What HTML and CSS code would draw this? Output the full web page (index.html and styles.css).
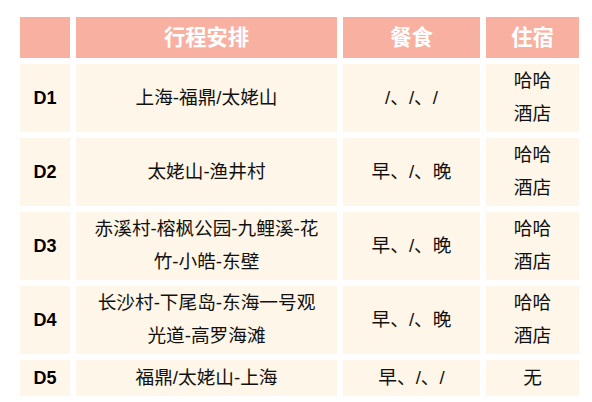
FILE: index.html
```html
<!DOCTYPE html>
<html lang="zh-CN">
<head>
<meta charset="utf-8">
<title>行程安排</title>
<link rel="stylesheet" href="styles.css">
</head>
<body>
<div class="wrap">
<table class="plan">
  <colgroup>
    <col class="c-day"><col class="c-route"><col class="c-meal"><col class="c-hotel">
  </colgroup>
  <thead>
    <tr class="head">
      <th></th><th>行程安排</th><th>餐食</th><th>住宿</th>
    </tr>
  </thead>
  <tbody>
    <tr class="tall">
      <td class="day">D1</td><td>上海-福鼎/太姥山</td><td>/、/、/</td><td>哈哈<br>酒店</td>
    </tr>
    <tr class="tall">
      <td class="day">D2</td><td>太姥山-渔井村</td><td>早、/、晚</td><td>哈哈<br>酒店</td>
    </tr>
    <tr class="tall">
      <td class="day">D3</td><td>赤溪村-榕枫公园-九鲤溪-花<br>竹-小皓-东壁</td><td>早、/、晚</td><td>哈哈<br>酒店</td>
    </tr>
    <tr class="tall">
      <td class="day">D4</td><td>长沙村-下尾岛-东海一号观<br>光道-高罗海滩</td><td>早、/、晚</td><td>哈哈<br>酒店</td>
    </tr>
    <tr class="short">
      <td class="day">D5</td><td>福鼎/太姥山-上海</td><td>早、/、/</td><td>无</td>
    </tr>
  </tbody>
</table>
</div>
</body>
</html>
```
FILE: styles.css
```css
html, body {
  margin: 0;
  padding: 0;
  background: #ffffff;
}
.wrap {
  padding: 11px 7px 0 14px;
}
.plan {
  width: 571px;
  table-layout: fixed;
  border-collapse: separate;
  border-spacing: 6px;
  font-family: "Liberation Sans", "Noto Sans CJK SC", sans-serif;
  color: #111111;
}
.c-day { width: 50px; }
.c-route { width: 261px; }
.c-meal { width: 137px; }
.c-hotel { width: 93px; }
.plan th, .plan td {
  padding: 0;
  text-align: center;
  vertical-align: middle;
}
.head th {
  height: 41px;
  background: #f8b0a1;
  color: #ffffff;
  font-size: 21.3px;
  font-weight: bold;
  line-height: 28px;
}
.plan td {
  background: #fef6e8;
  font-size: 18.67px;
  line-height: 32.6px;
}
.tall td { height: 68px; }
.short td { height: 36px; }
.plan td.day {
  font-weight: bold;
  font-size: 18px;
  color: #000000;
}
```
